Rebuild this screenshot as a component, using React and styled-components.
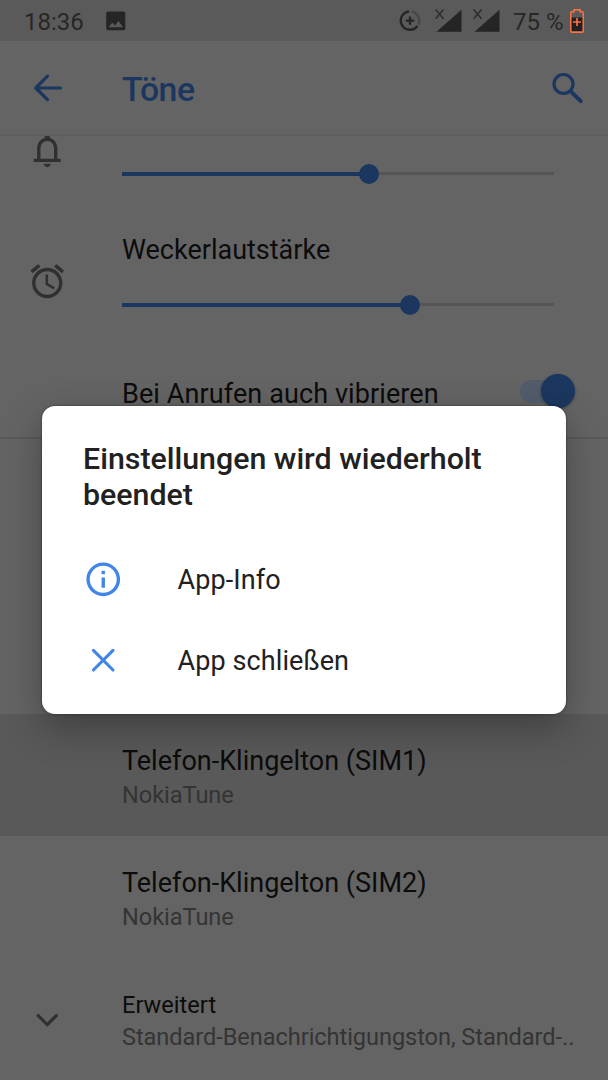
import React from 'react';
import styled, { createGlobalStyle } from 'styled-components';

const color = {
  page: '#646464',
  statusBar: '#5a5a5a',
  accent: '#1b375f',
  accentBright: '#4285e8',
  text: '#0c0c0c',
  secondary: '#343434',
  icon: '#303030',
  statusIcon: '#252525',
  track: '#555555',
  battery: '#ff7043',
};

const GlobalStyle = createGlobalStyle`
  *, *::before, *::after { box-sizing: border-box; }
  body { margin: 0; background: ${color.page}; font-family: Roboto, 'Liberation Sans', sans-serif; }
`;

const Screen = styled.div`
  position: relative;
  display: flex;
  flex-direction: column;
  width: 608px;
  height: 1080px;
  overflow: hidden;
  background: ${color.page};
  color: ${color.text};
`;

const StatusBar = styled.header`
  display: flex;
  align-items: center;
  flex: none;
  height: 41px;
  padding: 0 24px;
  background: ${color.statusBar};
  color: #272727;
  svg { display: block; flex: none; }
`;

const StatusText = styled.span`
  font-size: 24px;
  line-height: 28px;
  font-weight: 400;
  white-space: nowrap;
  padding-top: 2px;
  width: ${(p) => p.$width}px;
`;

const StatusIcons = styled.div`
  display: flex;
  align-items: center;
  margin-left: auto;
`;

const SignalPair = styled.div`
  display: flex;
  gap: 10px;
  margin: 0 12px 0 14px;
`;

const AppBar = styled.div`
  display: flex;
  align-items: center;
  flex: none;
  height: 95px;
  padding: 0 20px 0 27px;
  border-bottom: 2px solid #5e5e5e;
  color: ${color.accent};
  svg { display: block; flex: none; }
`;

const AppTitle = styled.h1`
  flex: 1;
  margin: 0;
  padding: 5px 0 0 54px;
  font-size: 33.75px;
  line-height: 40px;
  font-weight: 500;
  letter-spacing: -0.4px;
`;

const Content = styled.main`
  flex: 1;
  min-height: 0;
  overflow: hidden;
`;

const Scrolled = styled.div`
  margin-top: -52px;
`;

const Row = styled.div`
  display: grid;
  grid-template-columns: 95px 1fr auto;
  align-items: center;
  height: ${(p) => p.$height}px;
  padding: 0 33px 0 27px;
  background: ${(p) => (p.$pressed ? '#595959' : 'transparent')};
`;

const RowIcon = styled.div`
  padding-top: 2px;
  color: ${color.icon};
  svg { display: block; }
`;

const RowBody = styled.div`
  min-width: 0;
  padding-top: ${(p) => p.$shift || 0}px;
  padding-bottom: ${(p) => p.$lift || 0}px;
`;

const RowTitle = styled.div`
  min-height: 28px;
  font-size: ${(p) => (p.$small ? 23.6 : 27)}px;
  line-height: ${(p) => (p.$small ? 28 : 32)}px;
  letter-spacing: ${(p) => p.$spacing ?? 0}px;
  white-space: nowrap;
`;

const Summary = styled.div`
  margin-top: 4px;
  font-size: 23.6px;
  line-height: 28px;
  letter-spacing: -0.07px;
  color: ${color.secondary};
  white-space: nowrap;
`;

const SliderTrack = styled.div`
  display: flex;
  align-items: center;
  width: 432px;
  height: 20px;
  margin-top: 29px;
  background: linear-gradient(${color.track}, ${color.track}) center / 100% 3px no-repeat;
`;

const SliderFill = styled.div`
  height: 4px;
  background: ${color.accent};
`;

const SliderThumb = styled.div`
  flex: none;
  width: 20px;
  height: 20px;
  margin-left: -10px;
  border-radius: 50%;
  background: ${color.accent};
`;

const SwitchTrack = styled.div`
  display: flex;
  align-items: center;
  justify-content: flex-end;
  width: 55px;
  height: 23px;
  margin-bottom: 1px;
  border-radius: 12px;
  background: linear-gradient(#525c6b, #525c6b) left / 40px 100% no-repeat;
`;

const SwitchThumb = styled.div`
  width: 34px;
  height: 34px;
  flex: none;
  border-radius: 50%;
  background: ${color.accent};
  box-shadow: 0 1px 3px rgba(0, 0, 0, 0.35);
`;

const Section = styled.section`
  border-top: 2px solid #595959;
  padding-top: 275px;
`;

const Dialog = styled.div`
  position: absolute;
  left: 42px;
  top: 406px;
  width: 524px;
  height: 308px;
  padding: 35px 41px 0;
  border-radius: 13px;
  background: #fff;
  box-shadow: 0 14px 38px rgba(0, 0, 0, 0.3), 0 0 3px rgba(0, 0, 0, 0.4);
  color: #212121;
`;

const DialogTitle = styled.h2`
  margin: 0 0 27px;
  font-size: 30.35px;
  line-height: 35.5px;
  font-weight: 500;
`;

const DialogAction = styled.div`
  display: flex;
  align-items: center;
  height: 81px;
  gap: 54px;
  font-size: 27px;
  line-height: 32px;
  letter-spacing: 0.1px;
  svg { display: block; flex: none; color: ${color.accentBright}; }
  span { padding-top: 1px; }
`;

const Glyph = ({ size = 40.5, children, ...rest }) => (
  <svg width={size} height={size} viewBox="0 0 24 24" fill="currentColor" {...rest}>
    {children}
  </svg>
);

const PictureIcon = () => (
  <svg width="20" height="20" viewBox="0 0 20 20">
    <path
      fillRule="evenodd"
      fill={color.statusIcon}
      d="M2 .5h15.500a1.800 1.800 0 0 1 1.800 1.800V17.500a1.800 1.800 0 0 1-1.800 1.800H2A1.800 1.800 0 0 1 .2 17.500V2.300A1.800 1.800 0 0 1 2 .5zM2.500 16.200h14.600l-4.700-6.300-3.500 4.600-2.500-3z"
    />
  </svg>
);

const DataSaverIcon = () => (
  <svg width="22" height="22" viewBox="0 0 22 22" fill="none" strokeWidth="2.400">
    <path d="M12.600 1.500a9.200 9.200 0 0 1 6.600 13.300" stroke="#474747" />
    <path d="M10 1.450a9.200 9.200 0 1 0 8.400 14.600" stroke={color.statusIcon} />
    <path d="M11 6.400v8.400M6.800 10.600h8.400" stroke={color.statusIcon} strokeWidth="2.200" />
  </svg>
);

const SignalIcon = () => (
  <svg width="28" height="26" viewBox="0 0 28 26">
    <path d="M26.500 1.800v22H1.500z" fill={color.statusIcon} />
    <path d="M.7 1.500l7.800 9.300M8.500 1.500L.7 10.800" stroke="#2d2d2d" strokeWidth="1.500" fill="none" />
  </svg>
);

const BatteryIcon = () => (
  <svg width="14" height="24" viewBox="0 0 14 24">
    <path d="M1 8.500h12V22H1z" fill="#202020" />
    <path
      d="M4 .8h6v2h2.200a1 1 0 0 1 1 1v18.400a1 1 0 0 1-1 1H1.800a1 1 0 0 1-1-1V3.800a1 1 0 0 1 1-1H4z"
      fill="none"
      stroke={color.battery}
      strokeWidth="1.500"
    />
    <path d="M7 9v8M3 13h8" stroke={color.battery} strokeWidth="1.700" />
  </svg>
);

const BackIcon = () => (
  <svg width="41" height="41" viewBox="0 0 41 41" fill="none" stroke="currentColor" strokeWidth="3.200" strokeLinecap="round" strokeLinejoin="round">
    <path d="M20.500 9.200L8.700 21l11.800 11.600M9 21h24.500" />
  </svg>
);

const SearchIcon = () => (
  <svg width="40" height="40" viewBox="0 0 40 40" fill="none" stroke="currentColor" strokeLinecap="round">
    <circle cx="15.500" cy="16" r="9.500" strokeWidth="3.200" />
    <path d="M23.700 24.300l9 8.900" strokeWidth="4" />
  </svg>
);

const BellIcon = () => (
  <Glyph>
    <path d="M18 17v-6c0-3.070-1.630-5.640-4.500-6.320V4c0-.83-.67-1.500-1.500-1.500s-1.500.67-1.500 1.500v.68C7.630 5.360 6 7.930 6 11v6H4v2h16v-2h-2zm-2 0H8v-6c0-2.480 1.510-4.500 4-4.500s4 2.020 4 4.500v6zM10 20c0 1.100.9 2 2 2s2-.9 2-2h-4z" />
  </Glyph>
);

const AlarmIcon = () => (
  <Glyph>
    <path d="M12.500 8H11v6l4.750 2.850.75-1.230-4-2.370V8zm4.837-6.190l4.607 3.845-1.280 1.535-4.610-3.843zm-10.674 0l1.282 1.536L3.337 7.190l-1.280-1.536zM12 4c-4.970 0-9 4.030-9 9s4.030 9 9 9 9-4.030 9-9-4.030-9-9-9zm0 16c-3.860 0-7-3.140-7-7s3.140-7 7-7 7 3.140 7 7-3.140 7-7 7z" />
  </Glyph>
);

const ChevronIcon = () => (
  <Glyph>
    <path d="M6.700 8L12 13.300 17.300 8l1.300 1.400L12 15.900 5.400 9.400z" />
  </Glyph>
);

const InfoIcon = () => (
  <Glyph>
    <path d="M11 7h2v2h-2zm0 4h2v6h-2zm1-9C6.480 2 2 6.480 2 12s4.480 10 10 10 10-4.480 10-10S17.520 2 12 2zm0 18c-4.410 0-8-3.590-8-8s3.590-8 8-8 8 3.590 8 8-3.590 8-8 8z" />
  </Glyph>
);

const CloseIcon = () => (
  <svg width="40.500" height="40.500" viewBox="0 0 40.500 40.500" fill="none" stroke="currentColor" strokeWidth="3.100" strokeLinecap="round">
    <path d="M10.400 10.400l19.600 19.600M30 10.400L10.400 30" />
  </svg>
);

const Slider = ({ value }) => (
  <SliderTrack>
    <SliderFill style={{ width: `${value}%` }} />
    <SliderThumb />
  </SliderTrack>
);

const VolumeRow = ({ icon, title, value }) => (
  <Row $height={131}>
    <RowIcon>{icon}</RowIcon>
    <RowBody $lift={title ? 13 : 9}>
      <RowTitle>{title}</RowTitle>
      <Slider value={value} />
    </RowBody>
  </Row>
);

const RingtoneRow = ({ title, summary, pressed }) => (
  <Row $height={122} $pressed={pressed}>
    <RowIcon />
    <RowBody $shift={4}>
      <RowTitle>{title}</RowTitle>
      <Summary>{summary}</Summary>
    </RowBody>
  </Row>
);

export default function App() {
  return (
    <Screen>
      <GlobalStyle />
      <StatusBar>
        <StatusText $width={82}>18:36</StatusText>
        <PictureIcon />
        <StatusIcons>
          <DataSaverIcon />
          <SignalPair>
            <SignalIcon />
            <SignalIcon />
          </SignalPair>
          <StatusText $width={57}>75 %</StatusText>
          <BatteryIcon />
        </StatusIcons>
      </StatusBar>
      <AppBar>
        <BackIcon />
        <AppTitle>Töne</AppTitle>
        <SearchIcon />
      </AppBar>
      <Content>
        <Scrolled>
          <VolumeRow icon={<BellIcon />} value={57.2} />
          <VolumeRow icon={<AlarmIcon />} title="Weckerlautstärke" value={66.600} />
          <Row $height={91}>
            <RowIcon />
            <RowBody $shift={4}>
              <RowTitle $spacing={0.1}>Bei Anrufen auch vibrieren</RowTitle>
            </RowBody>
            <SwitchTrack>
              <SwitchThumb />
            </SwitchTrack>
          </Row>
          <Section>
            <RingtoneRow title="Telefon-Klingelton (SIM1)" summary="NokiaTune" pressed />
            <RingtoneRow title="Telefon-Klingelton (SIM2)" summary="NokiaTune" />
            <Row $height={122}>
              <RowIcon>
                <ChevronIcon />
              </RowIcon>
              <RowBody $shift={3}>
                <RowTitle $small>Erweitert</RowTitle>
                <Summary>Standard-Benachrichtigungston, Standard-..</Summary>
              </RowBody>
            </Row>
          </Section>
        </Scrolled>
      </Content>
      <Dialog role="dialog">
        <DialogTitle>Einstellungen wird wiederholt beendet</DialogTitle>
        <DialogAction>
          <InfoIcon />
          <span>App-Info</span>
        </DialogAction>
        <DialogAction>
          <CloseIcon />
          <span>App schließen</span>
        </DialogAction>
      </Dialog>
    </Screen>
  );
}
